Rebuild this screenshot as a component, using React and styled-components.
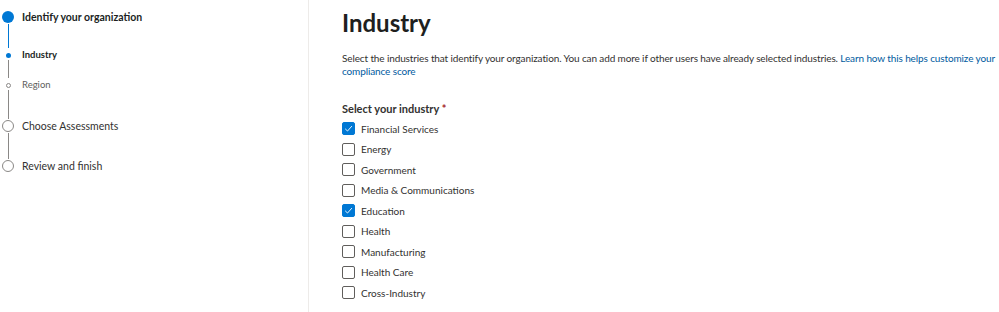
import styled, { createGlobalStyle } from 'styled-components'

const GlobalStyle = createGlobalStyle`
    body {
        margin: 0;
        background: #ffffff;
        font-family: Lato, 'Open Sans', sans-serif;
        color: #323130;
    }
`

// height = distance from this step's marker to the next one
const steps = [
    { label: 'Identify your organization', kind: 'main', state: 'active', height: 38, line: 'blue' },
    { label: 'Industry', kind: 'sub', state: 'active', height: 30, line: 'gray' },
    { label: 'Region', kind: 'sub', state: 'todo', height: 41, line: 'gray' },
    { label: 'Choose Assessments', kind: 'main', state: 'todo', height: 40, line: 'gray' },
    { label: 'Review and finish', kind: 'main', state: 'todo', height: 14, line: null },
]

const industries = [
    { name: 'Financial Services', checked: true },
    { name: 'Energy', checked: false },
    { name: 'Government', checked: false },
    { name: 'Media & Communications', checked: false },
    { name: 'Education', checked: true },
    { name: 'Health', checked: false },
    { name: 'Manufacturing', checked: false },
    { name: 'Health Care', checked: false },
    { name: 'Cross-Industry', checked: false },
]

const Check = () => (
    <svg width="9" height="9" viewBox="0 0 10 10">
        <path d="M1.3 5.3 L3.9 7.8 L8.8 2.3" fill="none" stroke="#ffffff" strokeWidth="1" />
    </svg>
)

const App = () => {
    return (
        <>
            <GlobalStyle />
            <Page>
                <Sidebar>
                    {steps.map((step) => (
                        <Step key={step.label} $height={step.height}>
                            <Rail>
                                <MarkerZone>
                                    <Marker $kind={step.kind} $state={step.state} />
                                </MarkerZone>
                                {step.line && <Line $color={step.line} $kind={step.kind} />}
                            </Rail>
                            <StepLabel $kind={step.kind} $state={step.state}>
                                {step.label}
                            </StepLabel>
                        </Step>
                    ))}
                </Sidebar>
                <Main>
                    <Title>Industry</Title>
                    <Description>
                        Select the industries that identify your organization. You can add
                        more if other users have already selected industries.{' '}
                        <Link href="#">Learn how this helps customize your compliance score</Link>
                    </Description>
                    <FieldLabel>
                        Select your industry <Required>*</Required>
                    </FieldLabel>
                    <CheckList>
                        {industries.map((item) => (
                            <CheckRow key={item.name}>
                                <Box $checked={item.checked}>{item.checked && <Check />}</Box>
                                <CheckText>{item.name}</CheckText>
                            </CheckRow>
                        ))}
                    </CheckList>
                </Main>
            </Page>
        </>
    )
}

export default App

const Page = styled.div`
    display: flex;
    width: 999px;
    height: 312px;
    overflow: hidden;
`

const Sidebar = styled.div`
    width: 309px;
    flex-shrink: 0;
    border-right: 1px solid #edebe9;
    padding-top: 10px;
    box-sizing: border-box;
`

const Step = styled.div`
    display: flex;
    align-items: flex-start;
    height: ${(p) => p.$height}px;
`

const Rail = styled.div`
    width: 16px;
    height: 100%;
    display: flex;
    flex-direction: column;
    align-items: center;
`

const MarkerZone = styled.div`
    height: 14px;
    display: flex;
    align-items: center;
    justify-content: center;
`

const Marker = styled.div`
    box-sizing: border-box;
    width: ${(p) => (p.$kind === 'main' ? '12px' : '5px')};
    height: ${(p) => (p.$kind === 'main' ? '12px' : '5px')};
    border-radius: 50%;
    background: ${(p) => (p.$state === 'active' ? '#0078d4' : '#ffffff')};
    border: ${(p) =>
        p.$state === 'active'
            ? 'none'
            : p.$kind === 'main'
            ? '1.5px solid #8a8886'
            : '1px solid #8a8886'};
`

const Line = styled.div`
    flex: 1;
    width: 1px;
    margin-top: ${(p) => (p.$kind === 'main' ? '0' : '-2.5px')};
    background: ${(p) => (p.$color === 'blue' ? '#0078d4' : '#8a8886')};
`

const StepLabel = styled.div`
    margin-left: 6px;
    line-height: 14px;
    white-space: nowrap;
    font-size: ${(p) => (p.$kind === 'main' ? '10.5px' : '9.5px')};
    font-weight: ${(p) => (p.$state === 'active' ? 700 : 400)};
    color: ${(p) =>
        p.$state === 'active' ? '#201f1e' : p.$kind === 'sub' ? '#605e5c' : '#323130'};
`

const Main = styled.div`
    flex: 1;
    padding: 5px 0 0 33px;
    min-width: 0;
`

const Title = styled.h1`
    margin: 0;
    font-size: 24px;
    line-height: 36px;
    font-weight: 700;
    color: #201f1e;
`

const Description = styled.p`
    margin: 11px 0 0 0;
    font-size: 10px;
    line-height: 13px;
    color: #323130;
    max-width: 655px;
    letter-spacing: -0.12px;
`

const Link = styled.a`
    color: #005a9e;
    text-decoration: none;
`

const FieldLabel = styled.div`
    margin-top: 24px;
    font-size: 11px;
    font-weight: 700;
    line-height: 14px;
    color: #323130;
`

const Required = styled.span`
    color: #a4262c;
`

const CheckList = styled.div`
    display: flex;
    flex-direction: column;
    gap: 7.5px;
    margin-top: 6px;
`

const CheckRow = styled.div`
    display: flex;
    align-items: center;
    height: 13px;
`

const Box = styled.div`
    box-sizing: border-box;
    width: 13px;
    height: 13px;
    border-radius: 2px;
    display: flex;
    align-items: center;
    justify-content: center;
    background: ${(p) => (p.$checked ? '#0078d4' : '#ffffff')};
    border: 1px solid ${(p) => (p.$checked ? '#0078d4' : '#605e5c')};
`

const CheckText = styled.span`
    margin-left: 6px;
    font-size: 10px;
    color: #323130;
`
